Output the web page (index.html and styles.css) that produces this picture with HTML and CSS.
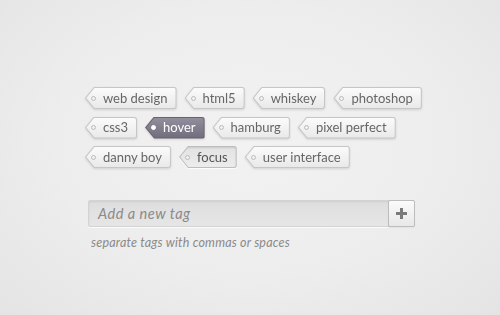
FILE: index.html
```html
<!DOCTYPE html>
<html>
<head>
<meta charset="utf-8">
<link rel="stylesheet" href="styles.css">
</head>
<body>
<div class="page">
  <div class="tags">
    <div class="row">
      <span class="tag"><span class="tag-b"><span class="tag-in">web design</span></span></span>
      <span class="tag"><span class="tag-b"><span class="tag-in">html5</span></span></span>
      <span class="tag"><span class="tag-b"><span class="tag-in">whiskey</span></span></span>
      <span class="tag"><span class="tag-b"><span class="tag-in">photoshop</span></span></span>
    </div>
    <div class="row">
      <span class="tag"><span class="tag-b"><span class="tag-in">css3</span></span></span>
      <span class="tag hover"><span class="tag-b"><span class="tag-in">hover</span></span></span>
      <span class="tag"><span class="tag-b"><span class="tag-in">hamburg</span></span></span>
      <span class="tag"><span class="tag-b"><span class="tag-in">pixel perfect</span></span></span>
    </div>
    <div class="row">
      <span class="tag"><span class="tag-b"><span class="tag-in">danny boy</span></span></span>
      <span class="tag focus"><span class="tag-b"><span class="tag-in">focus</span></span></span>
      <span class="tag"><span class="tag-b"><span class="tag-in">user interface</span></span></span>
    </div>
  </div>
  <div class="adder">
    <div class="field">
      <span class="placeholder">Add a new tag</span>
      <button class="add" type="button" aria-label="add">
        <svg width="11" height="11" viewBox="0 0 11 11"><path d="M4 0h3v4h4v3H7v4H4V7H0V4h4z" fill="#7a7a7a"/></svg>
      </button>
    </div>
    <p class="hint">separate tags with commas or spaces</p>
  </div>
</div>
</body>
</html>
```
FILE: styles.css
```css
html, body { margin: 0; height: 100%; }
body {
  background: radial-gradient(ellipse at 50% 45%, #f2f2f2 0%, #ededed 55%, #e4e4e4 100%);
  font-family: Lato, "Open Sans", sans-serif;
  overflow: hidden;
}
.page { padding: 87px 0 0 85px; }
.tags { display: flex; flex-direction: column; gap: 7.5px; }
.row { display: flex; gap: 8px; align-items: center; }
.tag { display: inline-flex; filter: drop-shadow(0 1px 1px rgba(0,0,0,0.13)); }
.tag-b {
  display: inline-flex;
  padding: 1px;
  background: #c6c6c6;
  border-radius: 0 3px 3px 0;
  clip-path: polygon(9px 0, 100% 0, 100% 100%, 9px 100%, 0 50%);
}
.tag-in {
  display: inline-flex;
  align-items: center;
  height: 20px;
  padding: 0 8px 0 5px;
  gap: 7px;
  background: linear-gradient(#fbfbfb, #e9e9e9);
  border-radius: 0 2px 2px 0;
  clip-path: polygon(8.5px 0, 100% 0, 100% 100%, 8.5px 100%, 0.3px 50%);
  color: #666;
  font-size: 13px;
  line-height: 1;
}
.tag-in::before {
  content: "";
  width: 3px;
  height: 3px;
  border-radius: 50%;
  border: 1px solid #bababa;
  background: #f2f2f2;
  flex: none;
}
.hover .tag-b { background: #67636f; }
.hover .tag-in { background: linear-gradient(#938e9c, #726d7d); color: #fff; }
.hover .tag-in::before { background: #fff; border-color: #fff; }
.focus .tag-b { background: #bdbdbd; }
.focus .tag-in { background: linear-gradient(#e3e3e3, #ececec); color: #555; box-shadow: inset 0 1px 2px rgba(0,0,0,0.12); }
.focus { filter: drop-shadow(0 1px 0 rgba(255,255,255,0.8)); }
.adder { margin: 32px 0 0 3px; width: 327px; }
.field {
  display: flex;
  align-items: center;
  justify-content: space-between;
  height: 25px;
  border: 1px solid #d3d3d3;
  border-radius: 2px;
  background: linear-gradient(#dedede, #e6e6e6);
  box-shadow: inset 0 1px 2px rgba(0,0,0,0.08), 0 1px 0 rgba(255,255,255,0.8);
}
.placeholder {
  padding-left: 9px;
  font-style: italic;
  font-size: 14.5px;
  letter-spacing: 0.5px;
  color: #8a8a8a;
}
.add {
  display: flex;
  align-items: center;
  justify-content: center;
  width: 27px;
  height: 27px;
  margin: -1px -1px -1px 0;
  padding: 0;
  border: 1px solid #bdbdbd;
  border-radius: 2px;
  background: linear-gradient(#fbfbfb, #e8e8e8);
  box-shadow: 0 1px 1px rgba(0,0,0,0.1);
}
.hint {
  margin: 8px 0 0 3px;
  font-style: italic;
  font-size: 12.5px;
  letter-spacing: 0.2px;
  color: #8a8a8a;
}
```
